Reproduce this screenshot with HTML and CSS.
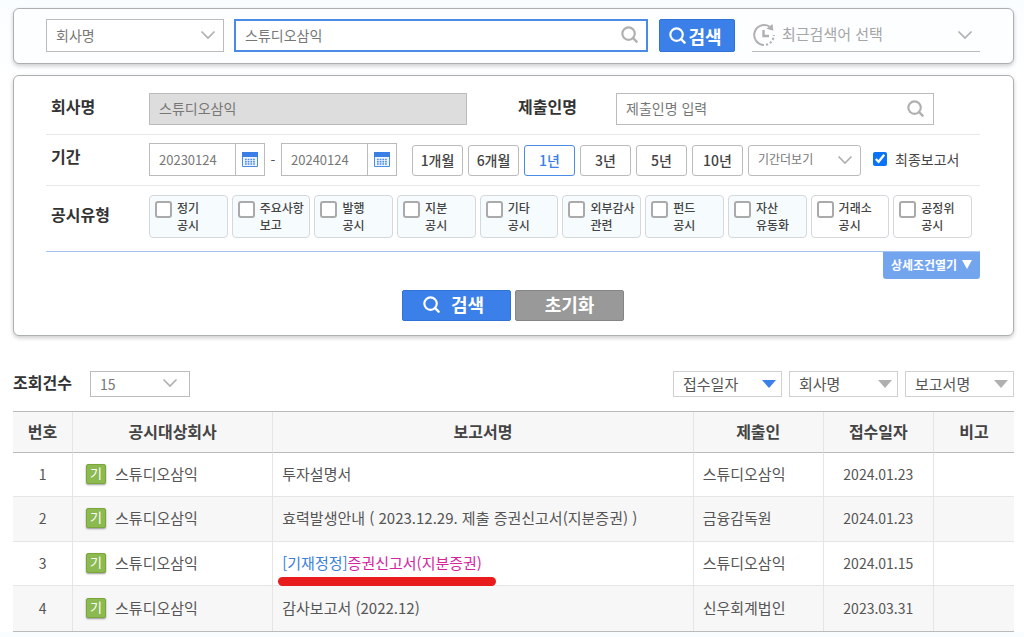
FILE: index.html
```html
<!DOCTYPE html>
<html lang="ko">
<head>
<meta charset="utf-8">
<title>공시 통합검색</title>
<link rel="stylesheet" href="styles.css">
</head>
<body>
<svg class="defs" aria-hidden="true">
  <symbol id="chev" viewBox="0 0 16 10"><path d="M1.500 1.500 8 8l6.500-6.500" fill="none" stroke="currentColor" stroke-width="1.700"/></symbol>
  <symbol id="glass" viewBox="0 0 18 18"><circle cx="8" cy="8" r="6.600" fill="none" stroke="currentColor" stroke-width="2.300"/><path d="m12.700 12.700 3.800 3.800" stroke="currentColor" stroke-width="2.600" stroke-linecap="round"/></symbol>
  <symbol id="tri" viewBox="0 0 14 8"><path d="M0 0h14L7 8z" fill="currentColor"/></symbol>
  <symbol id="tri-tall" viewBox="0 0 10 9"><path d="M0 0h10L5 9z" fill="currentColor"/></symbol>
  <symbol id="cal" viewBox="0 0 16 15"><path d="M.5.5h15v14H.5z" fill="#eef5ff" stroke="#4a8be8"/><path d="M0 0h16v5H0z" fill="#3b7fe6"/><path d="M3 7.500h10M3 9.800h10M3 12h10" stroke="#4a8be8" stroke-width="1.400" stroke-dasharray="1.700 1"/></symbol>
</svg>

<main class="page">
  <form class="panel quick">
    <span class="pick quick-kind"><select aria-label="검색 구분"><option>회사명</option></select><svg class="chev"><use href="#chev"/></svg></span>
    <span class="pick quick-word"><input type="text" aria-label="검색어" value="스튜디오삼익"><svg class="glass"><use href="#glass"/></svg></span>
    <button type="button" class="blue quick-go"><svg class="glass"><use href="#glass"/></svg>검색</button>
    <span class="pick recent">
      <svg class="clock" viewBox="0 0 24 24"><g fill="none" stroke="currentColor" stroke-width="2"><path d="M17.500 3.500A10 10 0 1 0 12 22"/><path stroke-width="2.400" d="M11.500 7v6h5.500"/><path d="M14 21.800a10 10 0 0 0 7.800-9.800" stroke-dasharray="2.200 2"/></g><path d="M14.500 5.800 20.500 1l.8 6.700z" fill="currentColor"/></svg>
      <select aria-label="최근검색어"><option>최근검색어 선택</option></select><svg class="chev"><use href="#chev"/></svg>
    </span>
  </form>

  <form class="panel detail">
    <div class="line names">
      <label class="title" for="company">회사명</label>
      <input id="company" class="locked" type="text" value="스튜디오삼익" readonly>
      <label class="title second" for="sender">제출인명</label>
      <span class="pick"><input id="sender" type="text" placeholder="제출인명 입력"><svg class="glass"><use href="#glass"/></svg></span>
    </div>
    <div class="line">
      <label class="title" for="from">기간</label>
      <div class="period">
        <span class="date"><input id="from" type="text" value="20230124"><button type="button" aria-label="시작일 달력"><svg><use href="#cal"/></svg></button></span>
        <span class="dash">-</span>
        <span class="date"><input type="text" aria-label="종료일" value="20240124"><button type="button" aria-label="종료일 달력"><svg><use href="#cal"/></svg></button></span>
        <div class="spans">
          <button type="button">1개월</button>
          <button type="button">6개월</button>
          <button type="button" class="on">1년</button>
          <button type="button">3년</button>
          <button type="button">5년</button>
          <button type="button">10년</button>
          <span class="pick more"><select aria-label="기간더보기"><option>기간더보기</option></select><svg class="chev"><use href="#chev"/></svg></span>
        </div>
        <label class="final"><input type="checkbox" checked>최종보고서</label>
      </div>
    </div>
    <div class="line kinds">
      <span class="title">공시유형</span>
      <div class="chips">
        <label class="chip"><input type="checkbox"><span>정기<br>공시</span></label>
        <label class="chip"><input type="checkbox"><span>주요사항<br>보고</span></label>
        <label class="chip"><input type="checkbox"><span>발행<br>공시</span></label>
        <label class="chip"><input type="checkbox"><span>지분<br>공시</span></label>
        <label class="chip"><input type="checkbox"><span>기타<br>공시</span></label>
        <label class="chip"><input type="checkbox"><span>외부감사<br>관련</span></label>
        <label class="chip"><input type="checkbox"><span>펀드<br>공시</span></label>
        <label class="chip"><input type="checkbox"><span>자산<br>유동화</span></label>
        <label class="chip plain"><input type="checkbox"><span>거래소<br>공시</span></label>
        <label class="chip plain"><input type="checkbox"><span>공정위<br>공시</span></label>
      </div>
    </div>
    <button type="button" class="expand">상세조건열기<svg><use href="#tri-tall"/></svg></button>
    <div class="actions">
      <button type="button" class="blue"><svg class="glass"><use href="#glass"/></svg>검색</button>
      <button type="reset" class="gray">초기화</button>
    </div>
  </form>

  <div class="tools">
    <label class="title" for="count">조회건수</label>
    <span class="pick count"><select id="count"><option>15</option></select><svg class="chev"><use href="#chev"/></svg></span>
    <div class="sorts">
      <button type="button" class="on">접수일자<svg><use href="#tri"/></svg></button>
      <button type="button">회사명<svg><use href="#tri"/></svg></button>
      <button type="button">보고서명<svg><use href="#tri"/></svg></button>
    </div>
  </div>

  <table class="results">
    <colgroup><col class="c-no"><col class="c-company"><col class="c-report"><col class="c-sender"><col class="c-date"><col class="c-note"></colgroup>
    <thead><tr><th>번호</th><th>공시대상회사</th><th>보고서명</th><th>제출인</th><th>접수일자</th><th>비고</th></tr></thead>
    <tbody>
      <tr><td class="num">1</td><td><span class="firm"><span class="badge">기</span><a href="#">스튜디오삼익</a></span></td><td><a href="#">투자설명서</a></td><td>스튜디오삼익</td><td class="num">2024.01.23</td><td></td></tr>
      <tr><td class="num">2</td><td><span class="firm"><span class="badge">기</span><a href="#">스튜디오삼익</a></span></td><td><a href="#">효력발생안내 ( 2023.12.29. 제출 증권신고서(지분증권) )</a></td><td>금융감독원</td><td class="num">2024.01.23</td><td></td></tr>
      <tr><td class="num">3</td><td><span class="firm"><span class="badge">기</span><a href="#">스튜디오삼익</a></span></td><td><a href="#" class="marked"><span class="fix">[기재정정]</span>증권신고서(지분증권)</a></td><td>스튜디오삼익</td><td class="num">2024.01.15</td><td></td></tr>
      <tr><td class="num">4</td><td><span class="firm"><span class="badge">기</span><a href="#">스튜디오삼익</a></span></td><td><a href="#">감사보고서 (2022.12)</a></td><td>신우회계법인</td><td class="num">2023.03.31</td><td></td></tr>
    </tbody>
  </table>
</main>
</body>
</html>
```
FILE: styles.css
```css
* { box-sizing: border-box; }

body {
  margin: 0;
  background: linear-gradient(#fafdff, #fff 100px);
  color: #555;
  font: 14px/20px "Noto Sans CJK KR", sans-serif;
}

.defs { position: absolute; width: 0; height: 0; }

.page { padding: 8px 10px 0 13px; }

input, select, button { margin: 0; font: inherit; color: inherit; border-radius: 0; }
button { padding: 0; cursor: pointer; }
a { color: inherit; text-decoration: none; }

.panel {
  border: 1px solid #adb0b0;
  border-radius: 6px;
  background: #fdfeff;
  box-shadow: 0 2px 4px rgba(0, 0, 0, .2);
}

/* Text boxes and drop-downs with an icon at the right edge */
.pick { position: relative; display: block; }
.pick select,
.pick input,
.locked {
  display: block;
  width: 100%;
  height: 32px;
  padding: 0 9px 2px;
  border: 1px solid #bbb;
  background: #fff;
  color: #777;
  appearance: none;
  outline: 0;
}
.pick input::placeholder { color: #777; opacity: 1; }
.chev, .pick > .glass { position: absolute; pointer-events: none; color: #b0b0b0; }
.chev { right: 8px; top: 0; bottom: 2px; margin: auto 0; width: 16px; height: 10px; }
.glass { width: 17px; height: 17px; }
.pick > .glass { right: 10px; top: 7px; }

.blue, .gray {
  display: flex;
  align-items: center;
  justify-content: center;
  border: 1px solid #2f72d8;
  border-radius: 2px;
  background: #3a80e8;
  color: #fff;
  font-size: 18px;
  font-weight: 700;
}

/* Quick search bar */
.quick { display: flex; padding: 10px 33px 11px 32px; }
.quick .pick select, .quick .pick input { height: 33px; }
.quick-kind { flex: 0 0 178px; margin-right: 10px; }
.quick-word { flex: 1; margin-right: 11px; }
.quick .quick-word input { border: 2px solid #4b8be8; }
.quick-go { flex: 0 0 76px; gap: 2px; margin-right: 17px; padding-right: 3px; }
.recent { flex: 0 0 228px; }
.quick .recent select { padding-left: 30px; border-width: 0 0 1px; background: transparent; color: #a5a5a5; font-size: 15px; }
.recent .chev { right: 7px; }
.clock { position: absolute; left: 0; top: 4px; width: 24px; height: 24px; color: #b0b0b0; }

/* Detailed conditions */
.detail { display: flex; flex-direction: column; margin-top: 11px; padding: 9px 33px 14px 32px; background: #fff; }
.line { display: grid; grid-template-columns: 103px 1fr; padding: 8px 0 9px; border-bottom: 1px solid #e8e8e8; }
.names { grid-template-columns: 103px 1fr 149px 1fr; padding-right: 46px; }
.title { padding: 1px 0 0 5px; color: #333; font-size: 16px; font-weight: 700; line-height: 24px; }
.second { padding-left: 51px; }
.locked { background: #ddd; }

.period { display: flex; align-items: center; }
.date { display: flex; width: 116px; height: 33px; border: 1px solid #bbb; background: #fff; }
.date input { flex: 1; min-width: 0; padding: 0 0 0 9px; border: 0; background: none; color: #777; font-size: 13px; outline: 0; }
.date button { display: grid; place-items: center; width: 29px; border: 0; border-left: 1px solid #bbb; background: none; }
.date svg { width: 16px; height: 15px; }
.dash { width: 16px; text-align: center; }
.spans { display: flex; align-self: flex-end; gap: 5px; margin-left: 15px; }
.spans button, .spans select { height: 31px; border: 1px solid #bbb; border-radius: 3px; background: #fff; }
.spans button { width: 51px; padding-bottom: 2px; color: #444; font-weight: 500; }
.spans .on { border-color: #4b8be8; color: #3a80e8; }
.spans .more { width: 113px; }
.spans .more select { height: 31px; padding-bottom: 4px; font-size: 12px; }
.final { display: flex; align-items: center; gap: 8px; margin-left: 12px; padding-bottom: 2px; white-space: nowrap; color: #444; }
.final input { width: 14px; height: 14px; accent-color: #0b73f5; }

.kinds { padding: 9px 8px 13px 0; border-color: #a3c4f3; }
.kinds .title { padding-top: 7px; }
.chips { display: grid; grid-template-columns: repeat(10, 1fr); gap: 4px; }
.chip {
  display: flex;
  gap: 5px;
  height: 43px;
  padding: 3px 0 0 5px;
  border: 1px solid #d5d8da;
  border-radius: 4px;
  background: #f6fbfe;
  color: #444;
  font-size: 12px;
  font-weight: 500;
  line-height: 17px;
  white-space: nowrap;
}
.plain { background: #fff; }
.chip input { flex: none; width: 17px; height: 17px; margin-top: 2px; border: 2px solid #aaa; border-radius: 3px; background: #fff; appearance: none; }

.expand {
  display: flex;
  align-items: center;
  justify-content: center;
  align-self: flex-end;
  gap: 5px;
  width: 97px;
  height: 27px;
  padding-bottom: 2px;
  border: 0;
  border-radius: 0 0 3px 3px;
  background: #73a5ef;
  color: #fff;
  font-size: 12px;
  font-weight: 700;
}
.expand svg { width: 10px; height: 9px; }

.actions { display: flex; justify-content: center; gap: 4px; margin-top: 11px; }
.actions button { width: 109px; height: 31px; padding-bottom: 3px; }
.actions .blue { gap: 11px; padding-right: 6px; }
.actions .gray { border-color: #858585; background: #999; }

/* Result list controls */
.tools { display: flex; margin-top: 35px; }
.tools .title { padding: 0; line-height: 22px; }
.count { width: 100px; margin-left: 18px; }
.count select { height: 26px; padding-bottom: 1px; }
.count .chev { right: 12px; }
.sorts { display: flex; gap: 7px; margin-left: auto; }
.sorts button {
  display: flex;
  align-items: center;
  justify-content: space-between;
  width: 109px;
  height: 26px;
  padding: 0 5px 1px 9px;
  border: 1px solid #d0d0d0;
  background: #fff;
  font-size: 15px;
}
.sorts svg { width: 14px; height: 8px; color: #b0b0b0; }
.sorts .on svg { color: #3a80e8; }

/* Result table */
.results {
  width: 100%;
  margin-top: 14px;
  border-spacing: 0;
  border-top: 1px solid #bbb;
  border-bottom: 1px solid #bbb;
  table-layout: fixed;
  font-size: 15px;
}
.c-no { width: 6%; }
.c-company { width: 20%; }
.c-report { width: 42%; }
.c-sender { width: 13%; }
.c-date { width: 11%; }
.c-note { width: 8%; }
.results th, .results td { padding: 0 9px 2px; border-right: 1px solid #e5e5e5; }
.results th:last-child, .results td:last-child { border-right: 0; }
.results th { height: 41px; padding-bottom: 3px; border-bottom: 1px solid #bbb; background: #f7f7f7; color: #444; font-size: 16px; font-weight: 700; }
.results td { height: 44px; border-bottom: 1px solid #e5e5e5; }
.results tr:last-child td { border-bottom: 0; }
.results tbody tr:nth-child(even) td { height: 45px; background: #f7f7f7; }
.results .num { padding: 0 0 2px; text-align: center; font-size: 14px; }
.firm { display: flex; align-items: center; gap: 9px; padding-left: 4px; }
.badge {
  width: 20px;
  height: 20px;
  border: 1px solid #7aa63c;
  border-radius: 2px;
  background: #8cba50;
  box-shadow: 0 1px 2px rgba(0, 0, 0, .4);
  color: #fff;
  font-size: 13px;
  line-height: 16px;
  text-align: center;
}
.marked { position: relative; color: #d6249f; }
.fix { color: #3a80d8; }
.marked::after {
  content: "";
  position: absolute;
  left: -4px;
  right: -14px;
  top: 25px;
  height: 9px;
  border-radius: 5px;
  background: #e81c1c;
}
```
